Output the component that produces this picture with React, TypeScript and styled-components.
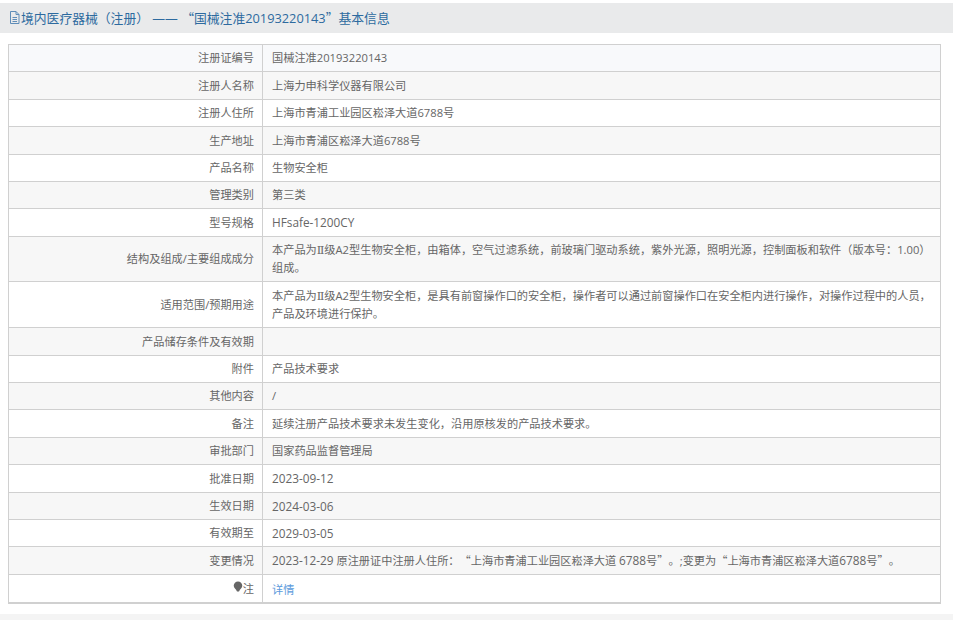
import React from 'react';
import styled, { createGlobalStyle } from 'styled-components';

const GlobalStyle = createGlobalStyle`
  html, body {
    margin: 0;
    padding: 0;
    background: #fff;
    font-family: "Open Sans", "Liberation Serif", "DejaVu Serif", "Noto Sans CJK SC", sans-serif;
    font-size: 11.2px;
    color: #666;
    text-spacing-trim: space-all;
  }
`;

const Page = styled.div`
  height: 620px;
  overflow: hidden;
  padding-top: 3px;
  box-sizing: border-box;
  display: flex;
  flex-direction: column;
`;

const TitleBar = styled.div`
  height: 30px;
  background: #e9eaeb;
  display: flex;
  align-items: center;
  gap: 1px;
  padding-left: 9px;
  font-size: 12.8px;
  color: #2d6a9f;
  white-space: pre;
`;

const Sheet = styled.table`
  width: 933px;
  margin: 11px 0 0 8px;
  border-collapse: collapse;
  border: 1px solid #d0d0d0;
  border-bottom-width: 2px;
  table-layout: fixed;
`;

const Row = styled.tr<{ $h: number; $bg: string }>`
  height: ${p => p.$h}px;
  background: ${p => p.$bg};
`;

const Label = styled.th`
  padding: 1px 8px 0 0;
  border: 1px solid #d0d0d0;
  text-align: right;
  font-weight: normal;
  line-height: 18px;
`;

const Value = styled.td`
  padding: 1px 4px 0 9px;
  border: 1px solid #d0d0d0;
  line-height: 18px;
`;

const Link = styled.a`
  position: relative;
  top: 1px;
  color: #5b9bdc;
  text-decoration: none;
`;

const Quote = styled.span`
  font-family: "Noto Sans CJK SC", sans-serif;
`;

const Num = styled.span`
  font-size: 11.8px;
`;

const Band = styled.div`
  height: 6px;
  margin-top: 10px;
  background: #f4f4f4;
`;

const rows: [string, React.ReactNode, number][] = [
  ['注册证编号', '国械注准20193220143', 27],
  ['注册人名称', '上海力申科学仪器有限公司', 28],
  ['注册人住所', '上海市青浦工业园区崧泽大道6788号', 27],
  ['生产地址', '上海市青浦区崧泽大道6788号', 28],
  ['产品名称', '生物安全柜', 27],
  ['管理类别', '第三类', 27],
  ['型号规格', <Num>HFsafe-1200CY</Num>, 28],
  ['结构及组成/主要组成成分', '本产品为Ⅱ级A2型生物安全柜，由箱体，空气过滤系统，前玻璃门驱动系统，紫外光源，照明光源，控制面板和软件（版本号：1.00）组成。', 45],
  ['适用范围/预期用途', '本产品为Ⅱ级A2型生物安全柜，是具有前窗操作口的安全柜，操作者可以通过前窗操作口在安全柜内进行操作，对操作过程中的人员，产品及环境进行保护。', 46],
  ['产品储存条件及有效期', '', 28],
  ['附件', '产品技术要求', 27],
  ['其他内容', '/', 27],
  ['备注', '延续注册产品技术要求未发生变化，沿用原核发的产品技术要求。', 28],
  ['审批部门', '国家药品监督管理局', 27],
  ['批准日期', <Num>2023-09-12</Num>, 28],
  ['生效日期', <Num>2024-03-06</Num>, 27],
  ['有效期至', <Num>2029-03-05</Num>, 27],
  [
    '变更情况',
    <>
      <Num>2023-12-29</Num> 原注册证中注册人住所：<Quote>“</Quote>上海市青浦工业园区崧泽大道 <Num>6788</Num>号<Quote>”</Quote>。;变更为
      <Quote>“</Quote>上海市青浦区崧泽大道<Num>6788</Num>号<Quote>”</Quote>。
    </>,
    28,
  ],
];

const rowColor = (i: number) => {
  if (i === 0) return '#f8f9fb';
  return i % 2 === 1 ? '#f7f7f7' : '#fff';
};

const DocIcon = () => (
  <svg width="11" height="13" viewBox="0 0 11 13" fill="none" stroke="#5f8db8" strokeWidth="1">
    <path d="M1.500 0.500h5.500l3 3v9h-8.500z" />
    <path d="M7 0.500v3h3M3.500 6.500h4.500M3.500 8.500h4.500M3.500 10.500h4.500" />
  </svg>
);

const BulbIcon = () => (
  <svg width="10" height="12" viewBox="0 0 10 12" fill="#666">
    <path d="M5 0.500a4.300 4.300 0 0 1 4.300 4.300c0 2-2.300 3.400-3.300 5.700h-2c-1-2.300-3.300-3.700-3.300-5.700a4.300 4.300 0 0 1 4.300-4.300z" />
  </svg>
);

export default function App() {
  return (
    <>
      <GlobalStyle />
      <Page>
        <TitleBar>
          <DocIcon />
          <span>
            境内医疗器械（注册） —— <Quote>“</Quote>国械注准20193220143<Quote>”</Quote>基本信息
          </span>
        </TitleBar>
        <Sheet>
          <colgroup>
            <col width={254} />
            <col />
          </colgroup>
          <tbody>
            {rows.map(([label, value, h], i) => (
              <Row key={label} $h={h} $bg={rowColor(i)}>
                <Label>{label}</Label>
                <Value>{value}</Value>
              </Row>
            ))}
            <Row $h={29} $bg="#fff">
              <Label>
                <BulbIcon />注
              </Label>
              <Value>
                <Link href="#">详情</Link>
              </Value>
            </Row>
          </tbody>
        </Sheet>
        <Band />
      </Page>
    </>
  );
}
